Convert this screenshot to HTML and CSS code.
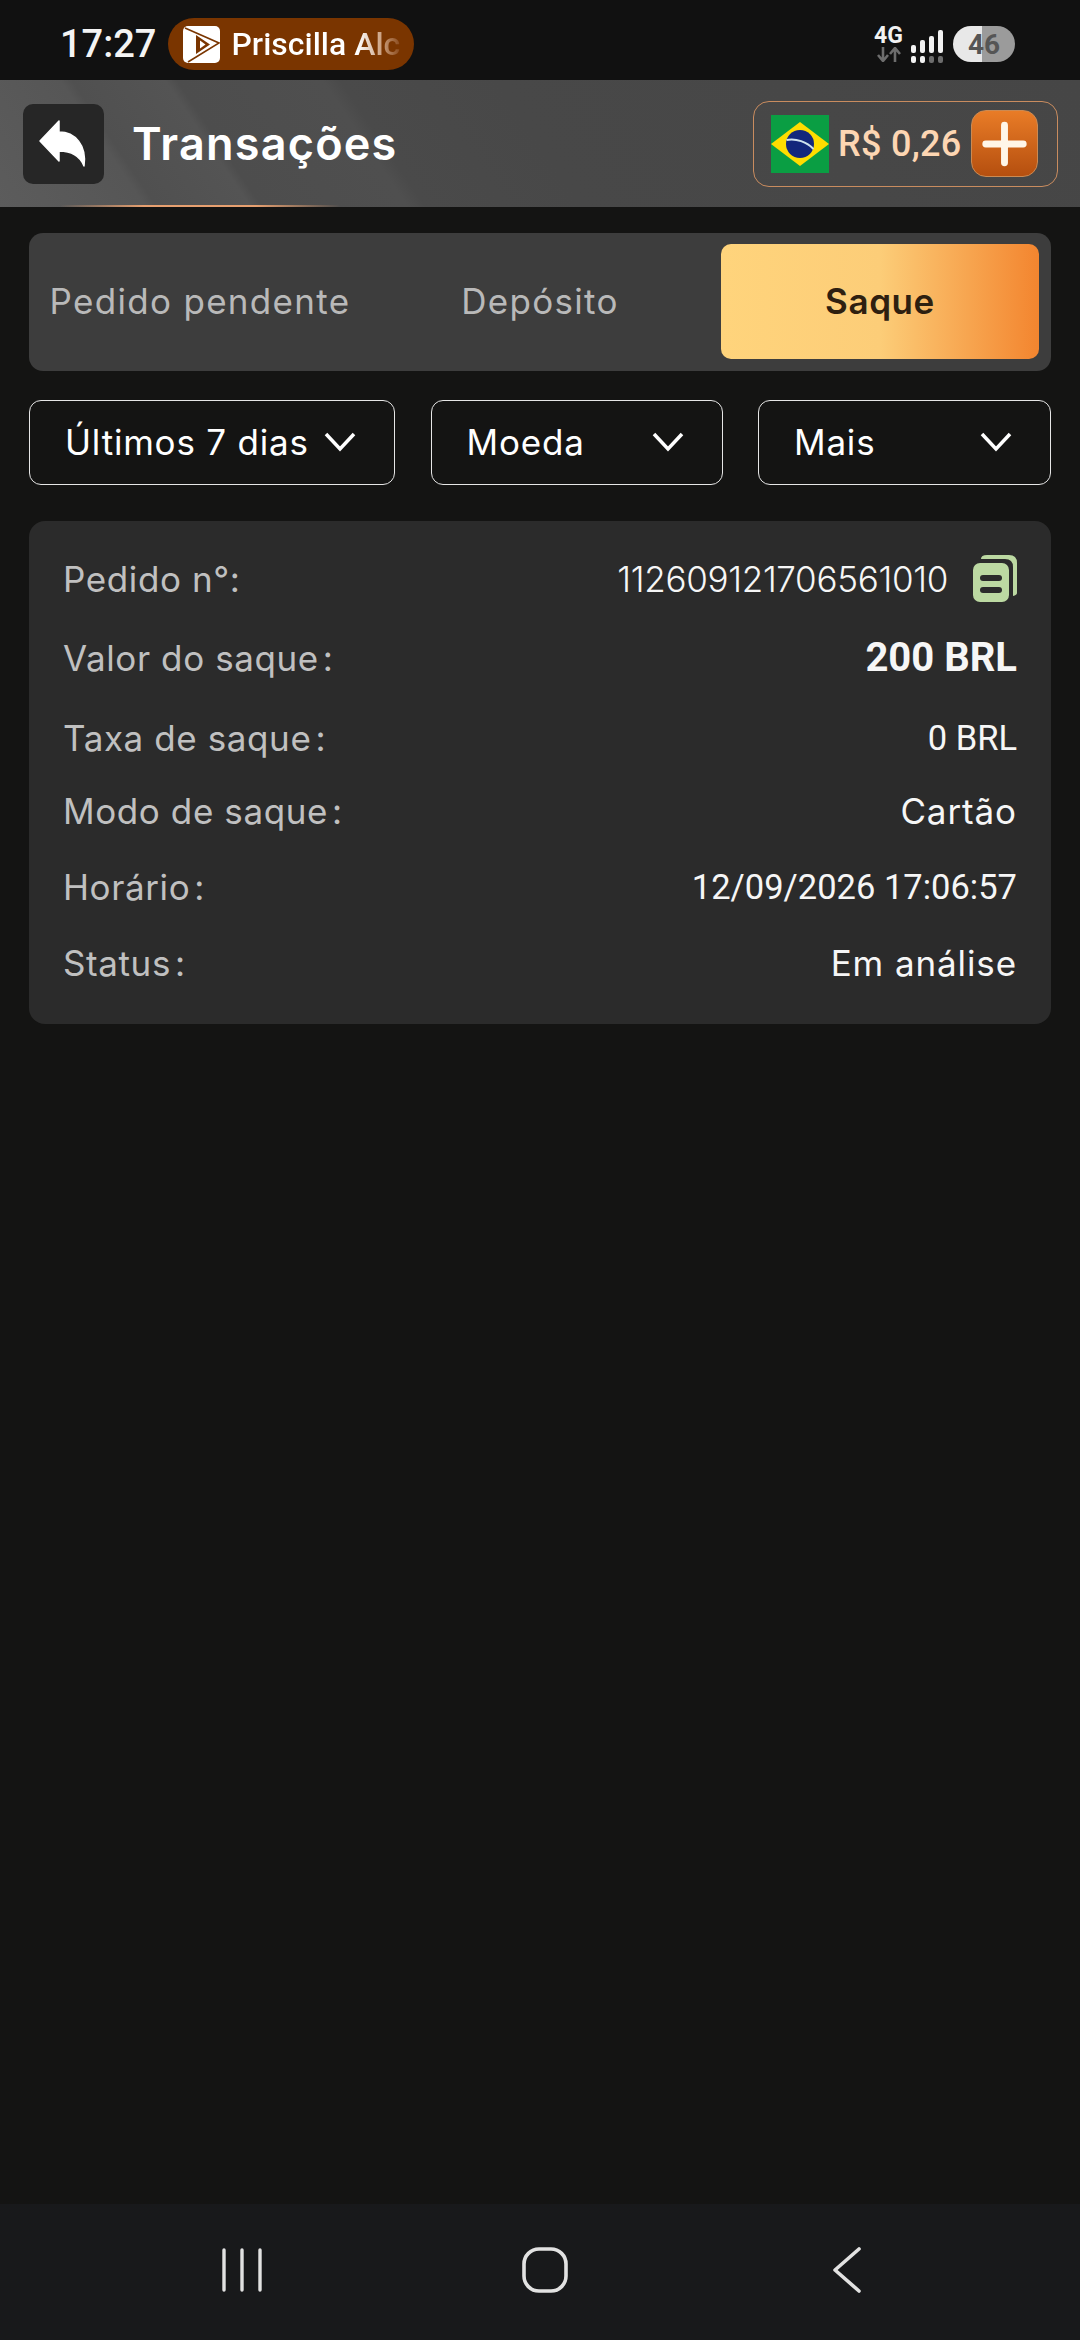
FILE: index.html
```html
<!DOCTYPE html>
<html lang="pt-BR">
<head>
    <meta charset="UTF-8">
    <meta name="viewport" content="width=device-width, initial-scale=1.0">
    <title>Transações</title>
    <link rel="stylesheet" href="styles.css">
</head>
<body>
    <div class="statusbar">
        <div class="status-left">
            <span class="clock">17:27</span>
            <div class="media-pill">
                <svg class="media-logo" viewBox="0 0 37 37">
                    <rect width="37" height="37" rx="5" fill="#fff"/>
                    <path d="M2 2 L36 17 L5 36" fill="none" stroke="#7a3500" stroke-width="1.6"/>
                    <path d="M13 9 L27 18.5 L13 28 Z M17 14.5 V22.5 L22.5 18.5 Z" fill="#7a3500" fill-rule="evenodd"/>
                </svg>
                <span class="media-title">Priscilla Alc</span>
            </div>
        </div>
        <div class="status-right">
            <div class="net">
                <span class="net-label">4G</span>
                <svg class="net-arrows" viewBox="0 0 24 15">
                    <path d="M6 0 V13 M1 8 L6 14 L11 8 M18 15 V2 M13 7 L18 1 L23 7" fill="none" stroke="#6d6d6d" stroke-width="2.6"/>
                </svg>
            </div>
            <svg class="signal" viewBox="0 0 33 33">
                <rect x="0" y="15" width="5" height="8" rx="2" fill="#f2f2f2"/>
                <rect x="9" y="10" width="5" height="13" rx="2" fill="#f2f2f2"/>
                <rect x="18" y="6" width="5" height="17" rx="2" fill="#f2f2f2"/>
                <rect x="27" y="0" width="5" height="23" rx="2" fill="#f2f2f2"/>
                <rect x="0" y="26" width="5" height="7" rx="2" fill="#f2f2f2"/>
                <rect x="9" y="26" width="5" height="7" rx="2" fill="#f2f2f2"/>
                <rect x="18" y="26" width="5" height="7" rx="2" fill="#6d6d6d"/>
                <rect x="27" y="26" width="5" height="7" rx="2" fill="#6d6d6d"/>
            </svg>
            <div class="battery">46</div>
        </div>
    </div>

    <header class="topbar">
        <div class="topbar-left">
            <div class="back-btn">
                <svg viewBox="0 0 81 80" width="81" height="80">
                    <path d="M17 37 L36 17 V28 C52 28 64 41 61 62 C57 52 49 47 36 47 V57 Z" fill="#fff" stroke="#fff" stroke-width="1.5" stroke-linejoin="round"/>
                </svg>
            </div>
            <h1 class="page-title">Transações</h1>
        </div>
        <div class="wallet">
            <svg class="flag" viewBox="0 0 58 58">
                <rect width="58" height="58" fill="#0a9e43"/>
                <path d="M29 7 L58 29 L29 51 L0 29 Z" fill="#fedd00"/>
                <circle cx="29" cy="29" r="14" fill="#12277c"/>
                <path d="M15.500 25 C25 23 36 27 42.500 34" fill="none" stroke="#cfe3ef" stroke-width="2"/>
            </svg>
            <span class="balance">R$ 0,26</span>
            <div class="add-btn">
                <svg viewBox="0 0 66 66" width="66" height="66">
                    <path d="M14 33 H52 M33 14 V52" stroke="#fff6e8" stroke-width="7" stroke-linecap="round"/>
                </svg>
            </div>
        </div>
    </header>

    <main class="content">
        <div class="tabs">
            <div class="tab">Pedido pendente</div>
            <div class="tab">Depósito</div>
            <div class="tab active">Saque</div>
        </div>

        <div class="filters">
            <div class="filter">
                <span>Últimos 7 dias</span>
                <svg class="chevron" viewBox="0 0 32 20"><path d="M2 2 L16 17 L30 2" fill="none" stroke="#fff" stroke-width="3.5"/></svg>
            </div>
            <div class="filter">
                <span>Moeda</span>
                <svg class="chevron" viewBox="0 0 32 20"><path d="M2 2 L16 17 L30 2" fill="none" stroke="#fff" stroke-width="3.5"/></svg>
            </div>
            <div class="filter">
                <span>Mais</span>
                <svg class="chevron" viewBox="0 0 32 20"><path d="M2 2 L16 17 L30 2" fill="none" stroke="#fff" stroke-width="3.5"/></svg>
            </div>
        </div>

        <div class="order-card">
            <div class="row">
                <span class="label">Pedido n°:</span>
                <span class="value order-id">112609121706561010
                    <svg class="copy" viewBox="0 0 44 47">
                        <path d="M14 0 H36 Q44 0 44 8 V38 Q44 40 40 41 V12 Q40 4 32 4 H8 Q8 0 14 0 Z" fill="#bcd9a2"/>
                        <rect x="0" y="8" width="36" height="39" rx="7" fill="#bcd9a2"/>
                        <rect x="7" y="20" width="22" height="6" rx="3" fill="#2b2b2b"/>
                        <rect x="7" y="32" width="22" height="6" rx="3" fill="#2b2b2b"/>
                    </svg>
                </span>
            </div>
            <div class="row">
                <span class="label">Valor do saque<span class="colon">:</span></span>
                <span class="value num amount">200 BRL</span>
            </div>
            <div class="row short fee">
                <span class="label">Taxa de saque<span class="colon">:</span></span>
                <span class="value num">0 BRL</span>
            </div>
            <div class="row short">
                <span class="label">Modo de saque<span class="colon">:</span></span>
                <span class="value">Cartão</span>
            </div>
            <div class="row short">
                <span class="label">Horário<span class="colon">:</span></span>
                <span class="value num">12/09/2026 17:06:57</span>
            </div>
            <div class="row short">
                <span class="label">Status<span class="colon">:</span></span>
                <span class="value">Em análise</span>
            </div>
        </div>
    </main>

    <nav class="navbar">
        <svg viewBox="0 0 40 44" width="40" height="44">
            <path d="M2 2 V42 M20 2 V42 M38 2 V42" stroke="#e2e2e2" stroke-width="3.4" stroke-linecap="round"/>
        </svg>
        <svg class="nav-home" viewBox="0 0 46 46" width="46" height="46">
            <rect x="2" y="2" width="42" height="42" rx="15" fill="none" stroke="#e2e2e2" stroke-width="3.6"/>
        </svg>
        <svg viewBox="0 0 30 46" width="30" height="46">
            <path d="M27 2 L3 23 L27 44" fill="none" stroke="#e2e2e2" stroke-width="3.6" stroke-linecap="round" stroke-linejoin="round"/>
        </svg>
    </nav>
</body>
</html>
```

FILE: styles.css
```css
* { box-sizing: border-box; }
html, body { margin: 0; padding: 0; }
body { width: 1080px; height: 2340px; background: #141413; font-family: Inter, "Noto Sans", sans-serif; color: #fff; display: flex; flex-direction: column; overflow: hidden; }

/* status bar */
.statusbar { height: 80px; background: #111; display: flex; justify-content: space-between; align-items: center; padding: 8px 65px 0 60px; flex: none; }
.status-left { display: flex; align-items: center; gap: 12px; }
.clock { font-family: Roboto, sans-serif; font-weight: 500; font-size: 38px; color: #f4f4f4; }
.media-pill { width: 246px; height: 52px; border-radius: 26px; background: #7a3500; display: flex; align-items: center; gap: 11px; padding-left: 15px; }
.media-logo { width: 37px; height: 37px; flex: none; }
.media-title { font-family: Roboto, sans-serif; font-weight: 500; font-size: 32px; white-space: nowrap; background: linear-gradient(90deg, #fff 75%, #c79a78 90%, #8a4a1c 100%); -webkit-background-clip: text; background-clip: text; color: transparent; }
.status-right { display: flex; align-items: center; }
.net { width: 31px; display: flex; flex-direction: column; align-items: center; }
.net-label { font-family: Roboto, sans-serif; font-weight: 700; font-size: 23px; line-height: 18px; color: #f2f2f2; }
.net-arrows { width: 24px; height: 15px; margin-top: 2px; }
.signal { width: 33px; height: 33px; margin-left: 7px; margin-top: 4px; }
.battery { width: 62px; height: 36px; border-radius: 18px; margin-left: 9px; background: linear-gradient(90deg, #e8e8e8 47%, #9b9b9b 47%); color: #555; font-family: Roboto, sans-serif; font-weight: 700; font-size: 28px; display: flex; align-items: center; justify-content: center; }

/* header */
.topbar { height: 127px; flex: none; position: relative; display: flex; justify-content: space-between; align-items: center; padding: 0 22px 0 23px; background: linear-gradient(56deg, #5c5c5c 0, #565656 12.5%, #505050 13.5%, #545454 21.5%, #4d4d4d 22.5%, #4f4f4f 35%, #4a4a4a 36.5%, #484848 50%, #464646 100%); }
.topbar::after { content: ""; position: absolute; left: 60px; bottom: 0; width: 280px; height: 2px; background: linear-gradient(90deg, transparent, #e7a070 30%, #e7a070 70%, transparent); }
.topbar-left { display: flex; align-items: center; gap: 28px; }
.back-btn { width: 81px; height: 80px; border-radius: 10px; background: #262626; }
.page-title { margin: 0; font-size: 45px; font-weight: 600; letter-spacing: 1.2px; }
.wallet { width: 305px; height: 86px; border: 1.5px solid #c98c5f; border-radius: 16px; display: flex; align-items: center; padding-left: 17px; }
.flag { width: 58px; height: 58px; flex: none; }
.balance { font-family: Roboto, sans-serif; font-weight: 500; font-size: 36px; letter-spacing: 0.3px; color: #fdd6b3; margin-left: 9px; width: 133px; white-space: nowrap; }
.add-btn { width: 67px; height: 67px; border-radius: 15px; background: linear-gradient(180deg, #e97c27, #b54f0f); border: 1.5px solid #cc8a52; display: flex; align-items: center; justify-content: center; }

/* content */
.content { flex: 1; padding: 26px 29px 0; }
.tabs { height: 138px; background: #3d3d3d; border-radius: 14px; padding: 11px 12px 12px; display: grid; grid-template-columns: repeat(3, 318px); justify-content: space-between; }
.tab { display: flex; align-items: center; justify-content: center; padding-bottom: 2px; font-size: 35px; letter-spacing: 1.3px; color: #b9b9b9; white-space: nowrap; border-radius: 10px; }
.tab.active { background: linear-gradient(90deg, #ffd47c 0, #fccd78 50%, #f3852f 100%); color: #2e2010; font-weight: 600; letter-spacing: 0.6px; }

.filters { display: grid; grid-template-columns: 366px 292px 293px; justify-content: space-between; margin-top: 29px; }
.filter { height: 85px; border: 1.5px solid #e6e6e6; border-radius: 12px; padding: 0 38px 2px 35px; display: flex; align-items: center; justify-content: space-between; font-size: 35px; letter-spacing: 0.8px; color: #fff; white-space: nowrap; }
.chevron { width: 32px; height: 20px; flex: none; }

.order-card { margin-top: 36px; height: 503px; background: #2b2b2b; border-radius: 16px; padding: 18px 34px 0 34px; }
.row { height: 79px; display: flex; align-items: center; justify-content: space-between; font-size: 35px; white-space: nowrap; }
.row.short { height: 76px; }
.row.fee { padding-top: 6px; }
.label { color: #c0c0c0; letter-spacing: 0.6px; display: flex; align-items: center; }
.colon { margin-left: 4px; }
.value { color: #f6f6f6; letter-spacing: 0.9px; display: flex; align-items: center; }
.value.num { font-family: Roboto, sans-serif; font-size: 34.5px; letter-spacing: 0; }
.value.amount { font-size: 40px; font-weight: 700; }
.order-id { font-weight: 300; letter-spacing: -0.3px; }
.copy { width: 44px; height: 47px; margin-left: 25px; }

/* android nav */
.navbar { height: 136px; flex: none; background: #18191b; display: flex; justify-content: space-between; align-items: center; padding: 0 218px 4px 222px; }
.nav-home { margin-right: 4px; }
```
